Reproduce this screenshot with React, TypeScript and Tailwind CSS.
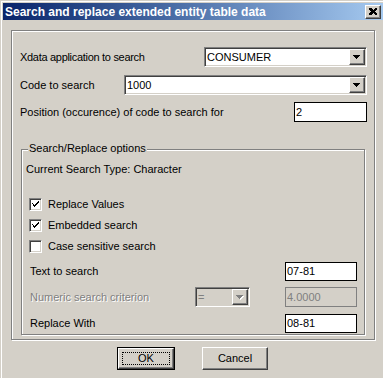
const raised =
	"border border-t-white border-l-white border-r-[#404040] border-b-[#404040] shadow-[inset_-1px_-1px_0_#808080,inset_1px_1px_0_#d4d0c8] bg-[#d4d0c8]";
const sunken =
	"border border-t-[#808080] border-l-[#808080] border-r-white border-b-white shadow-[inset_1px_1px_0_#404040,inset_-1px_-1px_0_#d4d0c8]";
const etched =
	"border border-[#808080] shadow-[1px_1px_0_#fff,inset_1px_1px_0_#fff]";

function Arrow({ disabled = false }: { disabled?: boolean }) {
	const fill = disabled ? "#808080" : "#000";
	return (
		<svg width="8" height="5" shapeRendering="crispEdges">
			{disabled && (
				<g fill="#fff">
					<rect x="1" y="1" width="7" height="1" />
					<rect x="2" y="2" width="5" height="1" />
					<rect x="3" y="3" width="3" height="1" />
					<rect x="4" y="4" width="1" height="1" />
				</g>
			)}
			<g fill={fill}>
				<rect x="0" y="0" width="7" height="1" />
				<rect x="1" y="1" width="5" height="1" />
				<rect x="2" y="2" width="3" height="1" />
				<rect x="3" y="3" width="1" height="1" />
			</g>
		</svg>
	);
}

function Combo({
	value,
	width,
	disabled = false,
}: {
	value: string;
	width: string;
	disabled?: boolean;
}) {
	return (
		<div
			className={`${sunken} ${width} h-[20px] flex items-center ${
				disabled ? "bg-[#d4d0c8]" : "bg-white"
			}`}
		>
			<span
				className={`flex-1 pl-[2px] leading-none ${
					disabled ? "text-[#808080]" : "text-black"
				}`}
			>
				{value}
			</span>
			<div
				className={`${raised} w-[16px] h-[16px] mr-[1px] flex items-center justify-center`}
			>
				<Arrow disabled={disabled} />
			</div>
		</div>
	);
}

function Field({
	value,
	height,
	disabled = false,
}: {
	value: string;
	height: string;
	disabled?: boolean;
}) {
	return (
		<div
			className={`w-[72px] ${height} border flex items-center px-[1px] ${
				disabled
					? "border-[#808080] bg-[#d4d0c8] text-[#808080]"
					: "border-black bg-white text-black"
			}`}
		>
			{value}
		</div>
	);
}

function Check({ checked, label }: { checked: boolean; label: string }) {
	return (
		<div className="h-[13px] flex items-center pl-[7px]">
			<div
				className={`${sunken} w-[13px] h-[13px] bg-white flex items-center justify-center`}
			>
				{checked && (
					<svg width="7" height="7" shapeRendering="crispEdges">
						<path
							d="M0 2h1v3h1v1h1v-1h1v-1h1v-1h1v-1h1v-2h-1v1h-1v1h-1v1h-1v1h-1v-1h-1v-1z"
							fill="#000"
						/>
						<path d="M0 2h1v1h1v1h1v1h-1v-1h-1v-1h-1z" fill="#000" />
					</svg>
				)}
			</div>
			<span className="ml-[6px]">{label}</span>
		</div>
	);
}

export default function App() {
	return (
		<div className="w-[383px] h-[378px] bg-[#d4d0c8] pl-[1px] pt-[1px] overflow-hidden font-['Liberation_Sans',Arial,sans-serif] text-[11px] leading-[13px] text-black">
			<div className="h-full border-l border-t border-white pl-[1px] pt-[1px]">
				{/* title bar */}
				<div className="h-[17px] flex items-center pl-[2px] pr-[2px] bg-gradient-to-r from-[#0a246a] to-[#a6caf0]">
					<span className="font-bold text-white text-[12px] leading-none">
						Search and replace extended entity table data
					</span>
					<div
						className={`${raised} ml-auto w-[16px] h-[14px] flex items-center justify-center`}
					>
						<svg width="8" height="7" shapeRendering="crispEdges">
							<path
								d="M0 0h2l2 2l2-2h2v1l-2 2.5l2 2.5v1h-2l-2-2l-2 2h-2v-1l2-2.5l-2-2.5z"
								fill="#000"
							/>
						</svg>
					</div>
				</div>

				{/* main group */}
				<div className={`${etched} ml-[8px] mt-[10px] w-[364px] h-[310px] pl-[8px] pr-[7px] pt-[16px]`}>
					<div className="h-[20px] flex items-center">
						<span className="tracking-[-0.3px]">Xdata application to search</span>
						<div className="ml-auto">
							<Combo value="CONSUMER" width="w-[163px]" />
						</div>
					</div>
					<div className="h-[20px] mt-[8px] flex items-center">
						<span>Code to search</span>
						<div className="ml-auto">
							<Combo value="1000" width="w-[243px]" />
						</div>
					</div>
					<div className="h-[20px] mt-[7px] flex items-center">
						<span>Position (occurence) of code to search for</span>
						<div className="ml-auto w-[73px] h-[20px] border border-black bg-white px-[1px] flex items-center">
							2
						</div>
					</div>

					{/* options group */}
					<div className={`${etched} relative ml-[1px] mt-[27px] w-[344px] h-[186px] pr-[7px]`}>
						<span className="absolute left-[6px] top-[-8px] px-[1px] bg-[#d4d0c8]">
							Search/Replace options
						</span>
						<div className="pt-[13px] pl-[4px]">Current Search Type: Character</div>
						<div className="mt-[22px] flex flex-col gap-[8px]">
							<Check checked label="Replace Values" />
							<Check checked label="Embedded search" />
							<Check checked={false} label="Case sensitive search" />
						</div>
						<div className="mt-[9px] h-[19px] pl-[8px] flex items-center">
							<span>Text to search</span>
							<div className="ml-auto">
								<Field value="07-81" height="h-[19px]" />
							</div>
						</div>
						<div className="mt-[6px] h-[20px] pl-[8px] flex items-center">
							<span className="text-[#808080] [text-shadow:1px_1px_0_#fff]">
								Numeric search criterion
							</span>
							<div className="ml-auto mr-[35px]">
								<Combo value="=" width="w-[55px]" disabled />
							</div>
							<Field value="4.0000" height="h-[20px]" disabled />
						</div>
						<div className="mt-[7px] h-[19px] pl-[8px] flex items-center">
							<span>Replace With</span>
							<div className="ml-auto">
								<Field value="08-81" height="h-[19px]" />
							</div>
						</div>
					</div>
				</div>

				{/* buttons */}
				<div className="mt-[7px] pl-[114px] flex gap-[27px]">
					<div className="w-[58px] h-[23px] border border-black">
						<div className={`${raised} w-full h-full p-[3px]`}>
							<div className="w-full h-full border border-dotted border-black flex items-center justify-center">
								OK
							</div>
						</div>
					</div>
					<div className={`${raised} w-[66px] h-[23px] flex items-center justify-center`}>
						Cancel
					</div>
				</div>
			</div>
		</div>
	);
}
